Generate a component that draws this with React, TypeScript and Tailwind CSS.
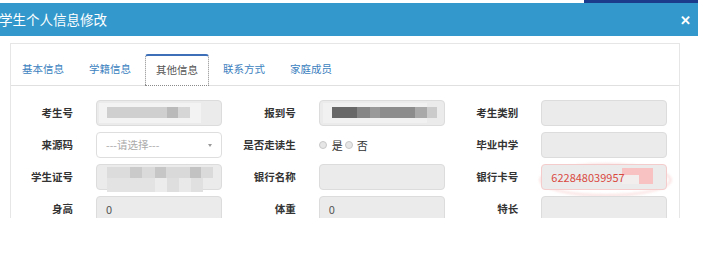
import React from "react";

const FONT = '"Microsoft YaHei", "Noto Sans CJK SC", "Noto Sans", sans-serif';

type Block = { l: number; t: number; w: number; h: number; c: string };

function Blur({ blocks }: { blocks: Block[] }) {
  return (
    <>
      {blocks.map((b, i) => (
        <div
          key={i}
          className="absolute"
          style={{ left: b.l, top: b.t, width: b.w, height: b.h, background: b.c }}
        />
      ))}
    </>
  );
}

function Box({ children, className = "" }: { children?: React.ReactNode; className?: string }) {
  return (
    <div
      className={`relative h-[26px] w-[126px] rounded-[4px] border border-[#dcdcdc] bg-[#ebebeb] flex items-center pl-[9px] text-[11px] text-[#555] ${className}`}
    >
      {children}
    </div>
  );
}

function Field({ label, children }: { label: string; children: React.ReactNode }) {
  return (
    <div className="flex w-[223px] items-center">
      <div className="w-[62px] text-right text-[10.5px] font-bold text-[#333] leading-none">{label}</div>
      <div className="ml-[23px]">{children}</div>
    </div>
  );
}

const blur1: Block[] = [
  { l: 2, t: 2, w: 102, h: 20, c: "#f3f3f3" },
  { l: 10, t: 6, w: 60, h: 11, c: "#cfcfcf" },
  { l: 70, t: 6, w: 11, h: 11, c: "#bababa" },
  { l: 81, t: 6, w: 12, h: 11, c: "#d6d6d6" },
];

const blur2: Block[] = [
  { l: 3, t: 2, w: 104, h: 20, c: "#f1f1f1" },
  { l: 12, t: 6, w: 25, h: 11, c: "#686868" },
  { l: 37, t: 6, w: 13, h: 11, c: "#868686" },
  { l: 50, t: 6, w: 10, h: 11, c: "#999" },
  { l: 60, t: 6, w: 35, h: 11, c: "#8c8c8c" },
  { l: 95, t: 6, w: 12, h: 11, c: "#a9a9a9" },
  { l: 107, t: 6, w: 10, h: 11, c: "#cbcbcb" },
];

const blur3: Block[] = [
  { l: 10, t: 2, w: 23, h: 11, c: "#dcdcdc" },
  { l: 33, t: 2, w: 12, h: 11, c: "#cacaca" },
  { l: 45, t: 2, w: 13, h: 11, c: "#dadada" },
  { l: 58, t: 2, w: 11, h: 11, c: "#c6c6c6" },
  { l: 69, t: 2, w: 24, h: 11, c: "#d9d9d9" },
  { l: 93, t: 2, w: 11, h: 11, c: "#c2c2c2" },
  { l: 104, t: 2, w: 12, h: 11, c: "#dadada" },
  { l: 10, t: 13, w: 48, h: 14, c: "#e3e3e3" },
  { l: 58, t: 13, w: 12, h: 14, c: "#ececec" },
  { l: 70, t: 13, w: 12, h: 14, c: "#dedede" },
  { l: 82, t: 13, w: 12, h: 14, c: "#e9e9e9" },
  { l: 94, t: 13, w: 12, h: 14, c: "#e0e0e0" },
];

export default function App() {
  return (
    <div className="relative h-[255px] w-[703px] overflow-hidden bg-white" style={{ fontFamily: FONT }}>
      {/* top strip */}
      <div className="flex h-[3px]">
        <div className="ml-[584px] w-[114px] bg-[#1c3b8a]" />
      </div>
      {/* header */}
      <div className="flex h-[33px] w-[698px] items-center justify-between bg-[#3399cc]">
        <div className="-ml-[1px] text-[13.5px] text-white leading-none">学生个人信息修改</div>
        <div className="mr-[7px] text-[13px] font-bold text-white leading-none">✕</div>
      </div>
      {/* panel */}
      <div className="ml-[10px] mt-[7px] h-[175px] w-[670px] overflow-hidden border border-b-0 border-[#e6e6e6]">
        {/* tabs */}
        <div className="flex h-[42px] items-end border-b border-[#e0e0e0]">
          {["基本信息", "学籍信息", "其他信息", "联系方式", "家庭成员"].map((t) =>
            t === "其他信息" ? (
              <div
                key={t}
                className="mr-[3px] -mb-px flex h-[32px] items-center rounded-t-[3px] border border-dotted border-[#8a8a8a] border-t-2 [border-top-style:solid] border-t-[#3d6fb8] bg-white px-[10px] text-[10.5px] text-[#555] leading-none"
              >
                {t}
              </div>
            ) : (
              <div
                key={t}
                className="mr-[3px] flex h-[31px] items-center border border-transparent px-[10px] text-[10.5px] text-[#3c7fc0] leading-none"
              >
                {t}
              </div>
            )
          )}
        </div>
        {/* form */}
        <div className="flex flex-col gap-[6px] pt-[14px]">
          <div className="flex">
            <Field label="考生号">
              <Box>
                <Blur blocks={blur1} />
              </Box>
            </Field>
            <Field label="报到号">
              <Box>
                <Blur blocks={blur2} />
              </Box>
            </Field>
            <Field label="考生类别">
              <Box />
            </Field>
          </div>
          <div className="flex">
            <Field label="来源码">
              <div className="flex h-[26px] w-[126px] items-center justify-between rounded-[4px] border border-[#dedede] bg-white pl-[9px] pr-[9px] text-[10.5px] text-[#aaa]">
                <span>---请选择---</span>
                <span className="h-0 w-0 border-l-[2.5px] border-r-[2.5px] border-t-[3px] border-l-transparent border-r-transparent border-t-[#999]" />
              </div>
            </Field>
            <Field label="是否走读生">
              <div className="flex h-[26px] items-center text-[11px] text-[#333]">
                <span className="h-[8px] w-[8px] rounded-full border border-[#c8c8c8] bg-[#e6e6e6]" />
                <span className="ml-[5px]">是</span>
                <span className="ml-[2px] h-[8px] w-[8px] rounded-full border border-[#c8c8c8] bg-[#e6e6e6]" />
                <span className="ml-[4px]">否</span>
              </div>
            </Field>
            <Field label="毕业中学">
              <Box />
            </Field>
          </div>
          <div className="flex">
            <Field label="学生证号">
              <Box className="overflow-visible">
                <Blur blocks={blur3} />
              </Box>
            </Field>
            <Field label="银行名称">
              <Box />
            </Field>
            <Field label="银行卡号">
              <div className="relative">
                <div className="absolute -left-[2px] -top-[1px] h-[34px] w-[133px] rounded-[50%] border-[3px] border-[#fce6e6] blur-[1px]" />
                <Box className="border-[#f5cccc] text-[#d9493f]">
                  <Blur
                    blocks={[
                      { l: 80, t: 3, w: 31, h: 16, c: "#f9c2c2" },
                      { l: 80, t: 10, w: 17, h: 9, c: "#f2eeee" },
                    ]}
                  />
                  <span className="relative text-[11px]">622848039957</span>
                </Box>
              </div>
            </Field>
          </div>
          <div className="flex">
            <Field label="身高">
              <Box>0</Box>
            </Field>
            <Field label="体重">
              <Box>0</Box>
            </Field>
            <Field label="特长">
              <Box />
            </Field>
          </div>
        </div>
      </div>
    </div>
  );
}
